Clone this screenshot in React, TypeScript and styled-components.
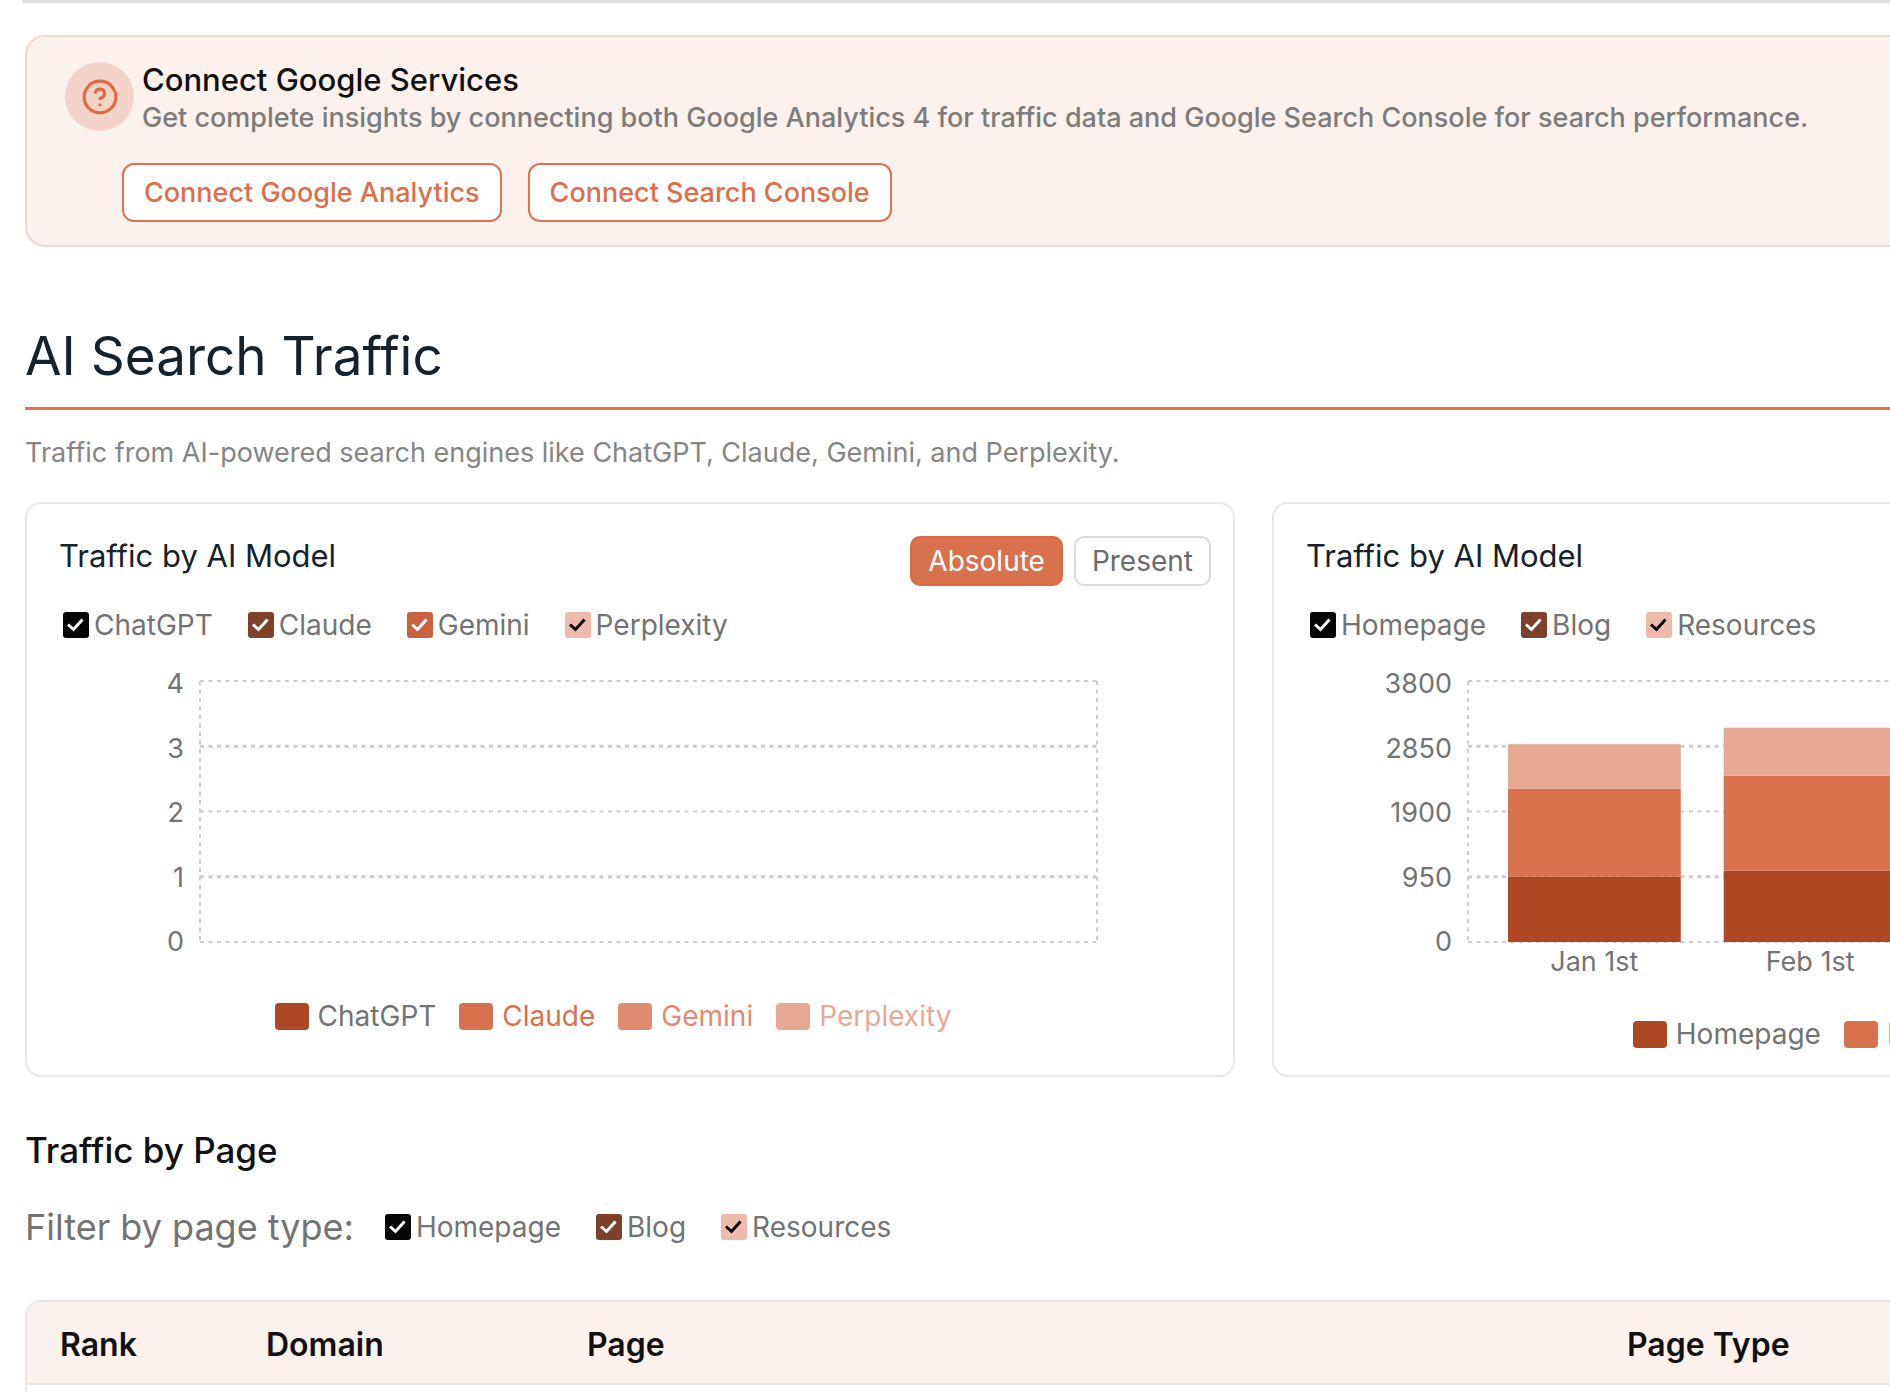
import React, { useId, useState } from "react";
import styled, { createGlobalStyle } from "styled-components";
import { CircleHelp } from "lucide-react";

const GlobalStyle = createGlobalStyle`
  *, *::before, *::after { box-sizing: border-box; }
  body {
    margin: 0;
    overflow: hidden;
    background: #ffffff;
    font-family: Inter, "Liberation Sans", sans-serif;
    font-size: 28px;
    font-weight: 400;
    color: #737373;
  }
  h1, h2, h3, p { margin: 0; font-weight: 400; }
  button, input { font: inherit; margin: 0; }
`;

const Viewport = styled.main`
  height: 100vh;
  overflow: hidden;
  background: #ffffff;
`;

const TopRule = styled.div`
  height: 3px;
  margin-left: 22px;
  background: #dedede;
`;

/* The dashboard is wider than the window and runs past its right edge. */
const Content = styled.div`
  width: 130vw;
  margin: 32px 0 0 25px;
  white-space: nowrap;
`;

const Banner = styled.section`
  padding: 24px 38px 23px;
  border: 2px solid #f5d8cd;
  border-radius: 20px;
  background: #fbf1ed;
`;

const BannerHead = styled.div`
  display: flex;
  align-items: flex-start;
  gap: 8px;
`;

const BannerIcon = styled.span`
  display: grid;
  place-items: center;
  width: 69px;
  height: 69px;
  margin-top: 1px;
  border-radius: 50%;
  background: #f4d4c9;
  color: #dc6b46;
`;

const BannerTitle = styled.h2`
  font-size: 31px;
  line-height: 38px;
  font-weight: 500;
  color: #111111;
`;

const BannerText = styled.p`
  font-size: 27px;
  line-height: 38px;
  font-weight: 500;
  color: #7c7c7c;
`;

const BannerActions = styled.div`
  display: flex;
  gap: 26px;
  margin: 26px 0 0 57px;
`;

const OutlineButton = styled.button`
  height: 59px;
  padding: 0 20px;
  border: 2px solid #dd7350;
  border-radius: 12px;
  background: #ffffff;
  color: #dc6f4b;
  font-size: 27px;
  font-weight: 500;
`;

const PageTitle = styled.h1`
  margin-top: 77px;
  padding-bottom: 19px;
  border-bottom: 3px solid #e0724f;
  font-size: 53px;
  line-height: 64px;
  color: #16222b;
`;

const Intro = styled.p`
  margin-top: 25px;
  font-size: 27px;
  line-height: 36px;
  color: #858585;
`;

const Cards = styled.div`
  display: grid;
  grid-template-columns: 1fr 1fr;
  gap: 37px;
  margin-top: 31px;
`;

const Card = styled.section`
  padding: 32px 22px 23px 32px;
  border: 2px solid #e8e8e8;
  border-radius: 16px;
`;

const CardHead = styled.header`
  display: flex;
  justify-content: space-between;
  align-items: flex-start;
  height: 50px;
`;

const CardTitle = styled.h3`
  font-size: 31px;
  line-height: 40px;
  color: #16222b;
`;

const Toggle = styled.div`
  display: flex;
  gap: 11px;
`;

const ToggleButton = styled.button<{ $active: boolean }>`
  height: 50px;
  padding: 0 16px;
  border: 2px solid ${(p) => (p.$active ? "#d9673f" : "#dadada")};
  border-radius: 10px;
  background: ${(p) => (p.$active ? "#d8714e" : "#ffffff")};
  color: ${(p) => (p.$active ? "#ffffff" : "#6b6b6b")};
`;

const Filters = styled.div`
  display: flex;
  align-items: center;
  gap: 35px;
`;

const CardFilters = styled(Filters)`
  height: 36px;
  margin: 21px 0 38px 4px;
`;

const CheckLabel = styled.label`
  display: flex;
  align-items: center;
  gap: 5px;
  line-height: 36px;
`;

const tick = (color: string) =>
  `url("data:image/svg+xml,%3Csvg xmlns='http://www.w3.org/2000/svg' viewBox='0 0 26 26' fill='none' stroke='${color}' stroke-width='3'%3E%3Cpath d='M5 12.5l5.5 5 9-10'/%3E%3C/svg%3E")`;

const CheckBox = styled.input<{ $color: string; $tick: string }>`
  appearance: none;
  width: 26px;
  height: 26px;
  border-radius: 3px;
  background: ${(p) => p.$color};

  &:checked {
    background-image: ${(p) => tick(p.$tick)};
  }
`;

const ChartRow = styled.div<{ $axis: number }>`
  display: grid;
  grid-template-columns: ${(p) => p.$axis}px 1fr;
  margin-right: 114px;
`;

const YAxis = styled.div`
  display: flex;
  flex-direction: column;
  justify-content: space-between;
  height: 294px;
  margin: -15px 0 -18px;
  padding-right: 16px;
  text-align: right;
  font-size: 27px;
  line-height: 36px;
`;

const Plot = styled.svg`
  display: block;
  width: 100%;
  height: 261px;
  overflow: visible;
`;

const XAxis = styled.div`
  display: grid;
  grid-column: 2;
  grid-template-columns: 40fr repeat(3, 173fr 43fr) 173fr 16fr;
  margin-top: 2px;
  font-size: 27px;
  line-height: 36px;
`;

const XLabel = styled.span<{ $index: number }>`
  grid-column: ${(p) => p.$index * 2 + 2};
  text-align: center;
`;

const Legend = styled.div<{ $top: number; $left: number; $right: number }>`
  display: flex;
  justify-content: center;
  gap: 23px;
  margin-top: ${(p) => p.$top}px;
  padding: 0 ${(p) => p.$right}px 0 ${(p) => p.$left}px;
  line-height: 36px;
`;

const LegendItem = styled.span<{ $text: string }>`
  display: flex;
  align-items: center;
  gap: 9px;
  color: ${(p) => p.$text};
`;

const Swatch = styled.i<{ $color: string }>`
  width: 34px;
  height: 27px;
  border-radius: 4px;
  background: ${(p) => p.$color};
`;

const SectionTitle = styled.h2`
  margin-top: 51px;
  font-size: 35px;
  line-height: 44px;
  font-weight: 500;
  color: #111111;
`;

const PageFilters = styled.div`
  display: flex;
  align-items: center;
  gap: 31px;
  height: 44px;
  margin: 33px 0 51px;
`;

const FilterCaption = styled.span`
  font-size: 36px;
`;

const TableFrame = styled.div`
  border: 2px solid #e8e8e8;
  border-radius: 16px;
  overflow: hidden;
`;

const Table = styled.table`
  width: 100%;
  table-layout: fixed;
  border-collapse: collapse;
`;

const HeadCell = styled.th<{ $width?: number }>`
  width: ${(p) => (p.$width ? `${p.$width}px` : "auto")};
  height: 82px;
  padding: 4px 0 0 33px;
  border-bottom: 2px solid #e8e8e8;
  background: #fbf1ed;
  text-align: left;
  font-size: 32px;
  font-weight: 600;
  color: #111111;
`;

const EmptyCell = styled.td`
  height: 80px;
`;

type Option = { name: string; color: string; tick?: string };
type Series = { name: string; color: string; text: string };
type Bar = { label: string; values: number[] };

const modelOptions: Option[] = [
  { name: "ChatGPT", color: "#050505" },
  { name: "Claude", color: "#7d402a" },
  { name: "Gemini", color: "#c8623f" },
  { name: "Perplexity", color: "#eebbab", tick: "black" },
];

const pageOptions: Option[] = [
  { name: "Homepage", color: "#050505" },
  { name: "Blog", color: "#7d402a" },
  { name: "Resources", color: "#eebbab", tick: "black" },
];

const modelSeries: Series[] = [
  { name: "ChatGPT", color: "#ad4724", text: "#737373" },
  { name: "Claude", color: "#d8714e", text: "#d8714e" },
  { name: "Gemini", color: "#e08b70", text: "#e08b70" },
  { name: "Perplexity", color: "#e7a994", text: "#e7a994" },
];

const pageSeries: Series[] = [
  { name: "Homepage", color: "#ad4724", text: "#737373" },
  { name: "Blog", color: "#d8714e", text: "#d8714e" },
  { name: "Resources", color: "#e7a994", text: "#e7a994" },
];

const bars: Bar[] = [
  { label: "Jan 1st", values: [950, 1280, 650] },
  { label: "Feb 1st", values: [1040, 1380, 700] },
  { label: "Mar 1st", values: [1100, 1400, 720] },
  { label: "Apr 1st", values: [1150, 1450, 740] },
];

function Check({ option }: { option: Option }) {
  const id = useId();
  return (
    <CheckLabel htmlFor={id}>
      <CheckBox
        id={id}
        type="checkbox"
        defaultChecked
        $color={option.color}
        $tick={option.tick ?? "white"}
      />
      {option.name}
    </CheckLabel>
  );
}

function Chart({ ticks, axis, data = [] }: { ticks: number[]; axis: number; data?: Bar[] }) {
  const max = ticks[0];
  const pct = (n: number) => `${n * 100}%`;
  return (
    <ChartRow $axis={axis}>
      <YAxis>
        {ticks.map((t) => (
          <span key={t}>{t}</span>
        ))}
      </YAxis>
      <Plot aria-hidden="true">
        <g stroke="#cdcdcd" strokeDasharray="4 4.5">
          {ticks.map((t, i) => (
            <line key={t} x1="0" x2="100%" y1={pct(i / 4)} y2={pct(i / 4)} strokeWidth={i % 2 ? 3 : 2} />
          ))}
          <line x1="0" x2="0" y1="0" y2="100%" strokeWidth="2" />
          <line x1="100%" x2="100%" y1="0" y2="100%" strokeWidth="2" />
        </g>
        {data.map((bar, b) => {
          let total = 0;
          return bar.values.map((value, s) => {
            total += value;
            return (
              <rect
                key={`${bar.label}-${s}`}
                x={pct((40 + b * 216) / 877)}
                width={pct(173 / 877)}
                y={pct(1 - total / max)}
                height={pct(value / max)}
                fill={pageSeries[s].color}
              />
            );
          });
        })}
      </Plot>
      {data.length > 0 && (
        <XAxis>
          {data.map((bar, i) => (
            <XLabel key={bar.label} $index={i}>
              {bar.label}
            </XLabel>
          ))}
        </XAxis>
      )}
    </ChartRow>
  );
}

type LegendProps = { series: Series[]; top: number; left?: number; right?: number };

function ChartLegend({ series, top, left = 0, right = 0 }: LegendProps) {
  return (
    <Legend $top={top} $left={left} $right={right}>
      {series.map((s) => (
        <LegendItem key={s.name} $text={s.text}>
          <Swatch $color={s.color} />
          {s.name}
        </LegendItem>
      ))}
    </Legend>
  );
}

export default function App() {
  const [mode, setMode] = useState("Absolute");
  return (
    <>
      <GlobalStyle />
      <Viewport>
        <TopRule />
        <Content>
          <Banner>
            <BannerHead>
              <BannerIcon>
                <CircleHelp size={38} strokeWidth={2} />
              </BannerIcon>
              <div>
                <BannerTitle>Connect Google Services</BannerTitle>
                <BannerText>
                  Get complete insights by connecting both Google Analytics 4 for traffic data and Google Search
                  Console for search performance.
                </BannerText>
              </div>
            </BannerHead>
            <BannerActions>
              <OutlineButton type="button">Connect Google Analytics</OutlineButton>
              <OutlineButton type="button">Connect Search Console</OutlineButton>
            </BannerActions>
          </Banner>

          <PageTitle>AI Search Traffic</PageTitle>
          <Intro>Traffic from AI-powered search engines like ChatGPT, Claude, Gemini, and Perplexity.</Intro>

          <Cards>
            <Card>
              <CardHead>
                <CardTitle>Traffic by AI Model</CardTitle>
                <Toggle>
                  {["Absolute", "Present"].map((name) => (
                    <ToggleButton key={name} type="button" $active={mode === name} onClick={() => setMode(name)}>
                      {name}
                    </ToggleButton>
                  ))}
                </Toggle>
              </CardHead>
              <CardFilters>
                {modelOptions.map((o) => (
                  <Check key={o.name} option={o} />
                ))}
              </CardFilters>
              <Chart ticks={[4, 3, 2, 1, 0]} axis={141} />
              <ChartLegend series={modelSeries} top={56} right={44} />
            </Card>
            <Card>
              <CardHead>
                <CardTitle>Traffic by AI Model</CardTitle>
              </CardHead>
              <CardFilters>
                {pageOptions.map((o) => (
                  <Check key={o.name} option={o} />
                ))}
              </CardFilters>
              <Chart ticks={[3800, 2850, 1900, 950, 0]} axis={162} data={bars} />
              <ChartLegend series={pageSeries} top={36} left={20} />
            </Card>
          </Cards>

          <SectionTitle>Traffic by Page</SectionTitle>
          <PageFilters>
            <FilterCaption>Filter by page type:</FilterCaption>
            <Filters>
              {pageOptions.map((o) => (
                <Check key={o.name} option={o} />
              ))}
            </Filters>
          </PageFilters>

          <TableFrame>
            <Table>
              <thead>
                <tr>
                  <HeadCell scope="col" $width={206}>Rank</HeadCell>
                  <HeadCell scope="col" $width={321}>Domain</HeadCell>
                  <HeadCell scope="col" $width={1040}>Page</HeadCell>
                  <HeadCell scope="col">Page Type</HeadCell>
                </tr>
              </thead>
              <tbody>
                <tr>
                  <EmptyCell colSpan={4} />
                </tr>
              </tbody>
            </Table>
          </TableFrame>
        </Content>
      </Viewport>
    </>
  );
}
